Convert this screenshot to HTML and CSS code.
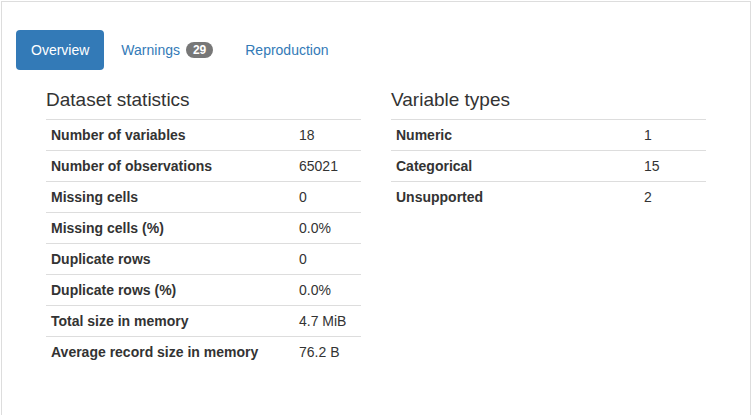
FILE: index.html
```html
<!DOCTYPE html>
<html>
<head>
<meta charset="utf-8">
<link rel="stylesheet" href="styles.css">
</head>
<body>
<div class="panel">
  <ul class="tabs">
    <li class="active"><a href="#">Overview</a></li>
    <li><a href="#">Warnings <span class="badge">29</span></a></li>
    <li><a href="#">Reproduction</a></li>
  </ul>
  <div class="content">
    <div class="col">
      <h4>Dataset statistics</h4>
      <table>
        <tr><th>Number of variables</th><td>18</td></tr>
        <tr><th>Number of observations</th><td>65021</td></tr>
        <tr><th>Missing cells</th><td>0</td></tr>
        <tr><th>Missing cells (%)</th><td>0.0%</td></tr>
        <tr><th>Duplicate rows</th><td>0</td></tr>
        <tr><th>Duplicate rows (%)</th><td>0.0%</td></tr>
        <tr><th>Total size in memory</th><td>4.7 MiB</td></tr>
        <tr><th>Average record size in memory</th><td>76.2 B</td></tr>
      </table>
    </div>
    <div class="col">
      <h4>Variable types</h4>
      <table>
        <tr><th>Numeric</th><td>1</td></tr>
        <tr><th>Categorical</th><td>15</td></tr>
        <tr><th>Unsupported</th><td>2</td></tr>
      </table>
    </div>
  </div>
</div>
</body>
</html>
```
FILE: styles.css
```css
html, body {
  margin: 0;
  padding: 0;
  background: #fff;
  overflow: hidden;
}
body {
  font-family: "Liberation Sans", Arial, Helvetica, sans-serif;
  font-size: 14px;
  line-height: 20px;
  color: #333;
}
.panel {
  margin: 1px 0 0 1px;
  width: 750px;
  height: 430px;
  box-sizing: border-box;
  border: 1px solid #ddd;
  padding: 28px 14px 0 14px;
}
.tabs {
  display: flex;
  gap: 2px;
  list-style: none;
  margin: 0;
  padding: 0;
}
.tabs a {
  display: block;
  padding: 10px 15px;
  line-height: 20px;
  border-radius: 4px;
  color: #337ab7;
  text-decoration: none;
}
.tabs .active a {
  background: #337ab7;
  color: #fff;
}
.badge {
  display: inline-block;
  min-width: 10px;
  margin-left: 2px;
  padding: 2px 7px;
  font-size: 12px;
  font-weight: bold;
  line-height: 12px;
  color: #fff;
  background: #777;
  border-radius: 10px;
  vertical-align: middle;
  text-align: center;
  position: relative;
  top: -1px;
}
.content {
  display: flex;
  gap: 30px;
  margin-left: 30px;
  padding-top: 20px;
}
.col {
  width: 315px;
}
h4 {
  margin: 0 0 9px;
  font-size: 19px;
  font-weight: 500;
  line-height: 20px;
  color: #333;
}
table {
  width: 100%;
  border-collapse: collapse;
}
th, td {
  padding: 5px;
  border-top: 1px solid #ddd;
  text-align: left;
  vertical-align: top;
}
th {
  width: 238px;
  font-weight: bold;
}
```
